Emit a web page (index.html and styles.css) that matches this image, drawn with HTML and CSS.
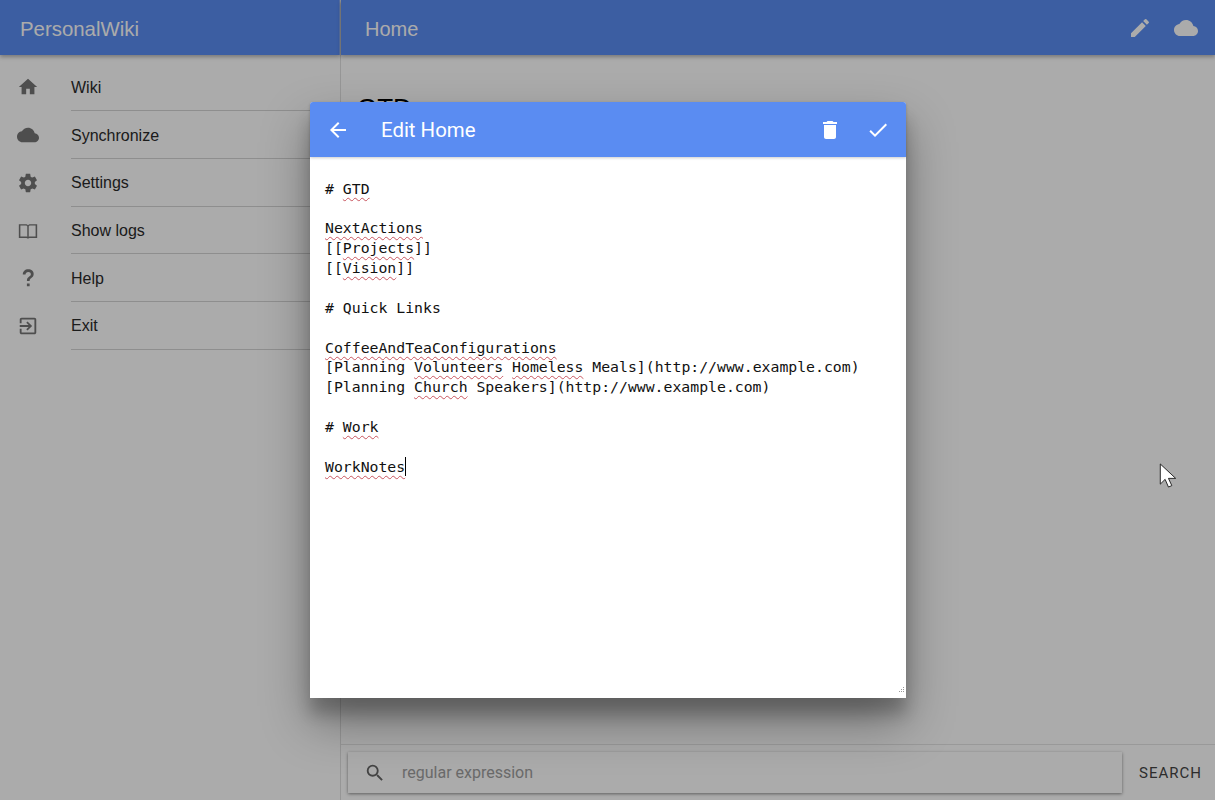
FILE: index.html
```html
<!DOCTYPE html>
<html lang="en">
<head>
<meta charset="utf-8">
<title>PersonalWiki</title>
<link rel="stylesheet" href="styles.css">
</head>
<body>
<div class="app">
  <aside class="sidebar">
    <header class="brand">PersonalWiki</header>
    <nav class="nav">
      <a class="nav-item"><span class="nav-icon"><svg viewBox="0 0 24 24"><path d="M10 20v-6h4v6h5v-8h3L12 3 2 12h3v8z"/></svg></span><span class="nav-label">Wiki</span></a>
      <a class="nav-item"><span class="nav-icon"><svg viewBox="0 0 24 24"><path d="M19.35 10.04C18.67 6.59 15.64 4 12 4 9.11 4 6.6 5.64 5.35 8.04 2.34 8.36 0 10.91 0 14c0 3.31 2.69 6 6 6h13c2.76 0 5-2.24 5-5 0-2.64-2.05-4.78-4.65-4.96z"/></svg></span><span class="nav-label">Synchronize</span></a>
      <a class="nav-item"><span class="nav-icon"><svg viewBox="0 0 24 24"><path d="M19.43 12.98c.04-.32.07-.64.07-.98s-.03-.66-.07-.98l2.11-1.65c.19-.15.24-.42.12-.64l-2-3.46c-.12-.22-.39-.3-.61-.22l-2.49 1c-.52-.4-1.08-.73-1.69-.98l-.38-2.65C14.46 2.18 14.25 2 14 2h-4c-.25 0-.46.18-.49.42l-.38 2.65c-.61.25-1.17.59-1.69.98l-2.49-1c-.23-.09-.49 0-.61.22l-2 3.46c-.13.22-.07.49.12.64l2.11 1.65c-.04.32-.07.65-.07.98s.03.66.07.98l-2.11 1.65c-.19.15-.24.42-.12.64l2 3.46c.12.22.39.3.61.22l2.49-1c.52.4 1.08.73 1.69.98l.38 2.65c.03.24.24.42.49.42h4c.25 0 .46-.18.49-.42l.38-2.65c.61-.25 1.17-.59 1.69-.98l2.49 1c.23.09.49 0 .61-.22l2-3.46c.12-.22.07-.49-.12-.64l-2.11-1.65zM12 15.5c-1.93 0-3.5-1.57-3.5-3.5s1.57-3.5 3.5-3.5 3.5 1.57 3.5 3.5-1.57 3.5-3.5 3.5z"/></svg></span><span class="nav-label">Settings</span></a>
      <a class="nav-item"><span class="nav-icon"><svg viewBox="0 0 24 24"><path d="M2 4.500h7.500c1.200 0 2.200.5 2.500 1.400.3-.9 1.300-1.400 2.500-1.400H22v15h-7.500c-1.200 0-2.200.3-2.500 1-.3-.7-1.300-1-2.500-1H2zM3.700 6v12h5.800c.8 0 1.500.1 1.700.3V7c-.2-.6-.9-1-1.700-1zm9.100 1v11.300c.2-.2.9-.3 1.700-.3h5.800V6h-5.800c-.8 0-1.500.4-1.700 1z"/></svg></span><span class="nav-label">Show logs</span></a>
      <a class="nav-item"><span class="nav-icon"><svg viewBox="0 0 24 24"><path d="M10.800 18h3v3h-3zM12.200 2.500c3.600 0 6 2 6 5.100 0 2.100-1 3.400-2.800 4.600-1.300.9-1.600 1.400-1.600 3.100h-3c0-2.400.7-3.600 2.500-4.900 1.300-.9 1.800-1.500 1.800-2.600 0-1.400-1.100-2.400-2.800-2.400-1.800 0-2.900 1-3 2.900h-3c.1-3.700 2.500-5.800 5.900-5.800z"/></svg></span><span class="nav-label">Help</span></a>
      <a class="nav-item"><span class="nav-icon"><svg viewBox="0 0 24 24"><path d="M10.090 15.590 11.500 17l5-5-5-5-1.410 1.410L12.670 11H3v2h9.670zM19 3H5c-1.110 0-2 .9-2 2v4h2V5h14v14H5v-4H3v4c0 1.100.89 2 2 2h14c1.100 0 2-.9 2-2V5c0-1.100-.9-2-2-2z"/></svg></span><span class="nav-label">Exit</span></a>
    </nav>
  </aside>
  <main class="main">
    <header class="topbar">
      <span class="topbar-title">Home</span>
      <span class="topbar-actions">
        <svg viewBox="0 0 24 24"><path d="M3 17.250V21h3.750L17.810 9.940l-3.750-3.750zM20.710 7.040a1 1 0 0 0 0-1.410l-2.340-2.340a1 1 0 0 0-1.410 0l-1.830 1.830 3.750 3.750z"/></svg>
        <svg viewBox="0 0 24 24"><path d="M19.350 10.040C18.670 6.590 15.640 4 12 4 9.110 4 6.600 5.640 5.350 8.040 2.340 8.360 0 10.910 0 14c0 3.310 2.690 6 6 6h13c2.760 0 5-2.240 5-5 0-2.640-2.050-4.780-4.650-4.960z"/></svg>
      </span>
    </header>
    <article class="page"><h1 class="page-heading">GTD</h1></article>
    <footer class="searchbar">
      <div class="search-box">
        <svg viewBox="0 0 24 24"><path d="M15.500 14h-.79l-.28-.27A6.470 6.470 0 0 0 16 9.500 6.500 6.500 0 1 0 9.500 16c1.610 0 3.090-.59 4.230-1.570l.27.28v.79l5 4.990L20.490 19zm-6 0C7.010 14 5 11.990 5 9.500S7.010 5 9.500 5 14 7.010 14 9.500 11.990 14 9.500 14z"/></svg>
        <span class="search-placeholder">regular expression</span>
      </div>
      <span class="search-button">SEARCH</span>
    </footer>
  </main>
</div>

<div class="scrim"></div>

<section class="dialog">
  <header class="dialog-bar">
    <svg class="bar-back" viewBox="0 0 24 24"><path d="M20 11H7.830l5.590-5.590L12 4l-8 8 8 8 1.410-1.410L7.830 13H20z"/></svg>
    <span class="dialog-title">Edit Home</span>
    <svg class="bar-icon" viewBox="0 0 24 24"><path d="M6 19c0 1.100.9 2 2 2h8c1.100 0 2-.9 2-2V7H6zM19 4h-3.500l-1-1h-5l-1 1H5v2h14z"/></svg>
    <svg class="bar-icon" viewBox="0 0 24 24"><path d="M9 16.170 4.830 12l-1.420 1.410L9 19 21 7l-1.410-1.410z"/></svg>
  </header>
  <div class="editor"><pre class="editor-text"># <span class="sp">GTD</span>

<span class="sp">NextActions</span>
[[<span class="sp">Projects</span>]]
[[<span class="sp">Vision</span>]]

# Quick Links

<span class="sp">CoffeeAndTeaConfigurations</span>
[Planning <span class="sp">Volunteers</span> <span class="sp">Homeless</span> Meals](http://www.example.com)
[Planning <span class="sp">Church</span> Speakers](http://www.example.com)

# <span class="sp">Work</span>

<span class="sp">WorkNotes</span><span class="caret"></span></pre>
    <svg class="grip" viewBox="0 0 8 8"><path d="M6 0h1v1H6zM4 2h1v1H4zM6 2h1v1H6zM2 4h1v1H2zM4 4h1v1H4zM6 4h1v1H6z"/></svg>
  </div>
</section>

<svg class="pointer" viewBox="0 0 17 26"><path d="M1 1v21l5-5 3.500 8 3.500-1.500-3.500-7.500H17z"/></svg>
</body>
</html>
```
FILE: styles.css
```css
* { box-sizing: border-box; }
html, body { margin: 0; height: 100%; overflow: hidden; }
body { font-family: "Liberation Sans", Arial, sans-serif; background: #fff; color: #212121; }

.app { display: flex; height: 800px; }

.sidebar { width: 341px; flex: none; border-right: 1px solid #e0e0e0; display: flex; flex-direction: column; }
.brand { height: 55px; flex: none; padding: 3px 0 0 20px; display: flex; align-items: center; background: #5a8cf2; color: #fff; font-size: 20.400px; box-shadow: 0 2px 4px rgba(0,0,0,.3); border-right: 1px solid #82a6f0; position: relative; }
.nav { padding-top: 8.600px; }
.nav-item { display: flex; height: 47.700px; align-items: center; font-size: 16px; color: #2b2b2b; }
.nav-icon { width: 71px; flex: none; padding-left: 17px; display: flex; }
.nav-icon svg { width: 22px; height: 22px; fill: #757575; }
.nav-label { flex: 1; align-self: stretch; display: flex; align-items: center; border-bottom: 1px solid #d4d4d4; padding-top: 2px; }

.main { flex: 1; min-width: 0; display: flex; flex-direction: column; }
.topbar { height: 55px; flex: none; background: #5a8cf2; color: #fff; display: flex; align-items: center; justify-content: space-between; padding: 3px 17px 0 24px; font-size: 20px; box-shadow: 0 2px 4px rgba(0,0,0,.3); position: relative; }
.topbar-actions { display: flex; gap: 22px; align-items: center; margin-top: -3px; }
.topbar-actions svg { width: 24px; height: 24px; fill: #fff; }
.page { flex: 1; padding: 38px 17px 0 16px; }
.page-heading { margin: 0; font-size: 26px; font-weight: 400; line-height: 30px; color: #000; }

.searchbar { height: 56px; flex: none; border-top: 1px solid #e4e4e4; background: #fff; display: flex; align-items: center; padding: 0 13px 0 7px; }
.search-box { flex: 1; height: 41px; display: flex; align-items: center; padding-left: 16px; background: #fff; box-shadow: 0 1px 3px rgba(0,0,0,.45); }
.search-box svg { width: 22px; height: 22px; fill: #666; flex: none; }
.search-placeholder { margin-left: 16px; font-size: 16px; color: #9e9e9e; font-family: Roboto, sans-serif; }
.search-button { margin-left: 17px; font-family: Roboto, sans-serif; font-size: 15px; letter-spacing: 1px; color: #444; }

.scrim { position: absolute; inset: 0; background: rgba(0,0,0,.33); }

.dialog { position: absolute; left: 310px; top: 102px; width: 596px; height: 596px; background: #fff; display: flex; flex-direction: column; border-radius: 3px 3px 0 0; box-shadow: 0 24px 48px rgba(0,0,0,.36), 0 16px 16px rgba(0,0,0,.2); }
.dialog-bar { height: 55px; flex: none; background: #5a8cf2; color: #fff; display: flex; align-items: center; padding: 0 16px; border-radius: 3px 3px 0 0; box-shadow: 0 1px 3px rgba(0,0,0,.2); position: relative; }
.dialog-bar svg { width: 24px; height: 24px; fill: #fff; flex: none; }
.dialog-title { flex: 1; margin-left: 31px; font-family: Roboto, sans-serif; font-size: 20.400px; }
.bar-icon { margin-left: 24px; }
.editor { flex: 1; position: relative; padding: 21.700px 15px 0; }
.editor-text { margin: 0; font-family: "DejaVu Sans Mono", monospace; font-size: 14.800px; line-height: 19.860px; color: #111; }
.sp { text-decoration: underline wavy #c8555f; text-decoration-thickness: 1px; text-underline-offset: 3px; text-decoration-skip-ink: none; }
.caret { display: inline-block; width: 1px; height: 19px; background: #000; vertical-align: -4px; }
.grip { position: absolute; right: 1px; bottom: 3px; width: 8px; height: 8px; fill: #999; }

.pointer { position: absolute; left: 1159px; top: 463px; width: 17px; height: 25px; fill: #fff; stroke: #222; stroke-width: 1; }
```
